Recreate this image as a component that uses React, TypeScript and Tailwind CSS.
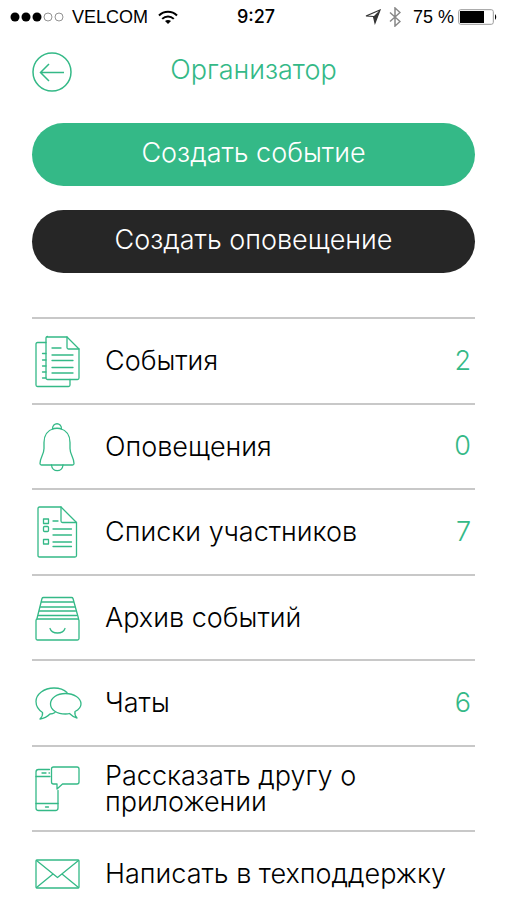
import React from 'react';

interface IconProps {
    children: React.ReactNode;
}

// Shared frame for the outline icons in the menu.
const MenuIcon: React.FC<IconProps> = ({ children }) => (
    <svg
        viewBox="0 0 50 56"
        className="h-14 w-[50px] shrink-0"
        fill="none"
        stroke="#34b987"
        strokeWidth="1.3"
        strokeLinecap="round"
        strokeLinejoin="round"
        aria-hidden="true"
    >
        {children}
    </svg>
);

const DocumentsIcon = () => (
    <MenuIcon>
        <path d="M15 4h20l12 12v29q0 1.500-1.500 1.500h-30q-1.500 0-1.500-1.500v-40q0-1.500 1.500-1.500z" />
        <path d="M35 4v10.500q0 1.500 1.500 1.500h10.500" />
        <path d="M14 9.500h-8.500q-1.500 0-1.500 1.500v41q0 1.500 1.500 1.500h31q1.500 0 1.500-1.500v-5.500" />
        <path d="M20 15h9M20 22h21M20 27.500h21M20 34.500h21M20 40h21M10.500 20.500h3.500M10.500 27h3.500M10.500 33h3.500M10.500 39h3.500M10.500 45h3.500" />
    </MenuIcon>
);

const BellIcon = () => (
    <MenuIcon>
        <path d="M22 9.500c-7 2-10 7-10 14v6c0 6-4 9-4 15 0 1 .5 1.500 1.500 1.500h31c1 0 1.500-.5 1.500-1.500 0-6-4-9-4-15v-6c0-7-3-12-10-14" />
        <path d="M20.500 10c0-7 9-7 9 0-2-1-7-1-9 0z" />
        <path d="M19.500 46c.5 7.500 11 7.500 11.500 0" />
    </MenuIcon>
);

const ListIcon = () => (
    <MenuIcon>
        <path d="M7.500 3h21.500l15.500 15.500v33q0 1.500-1.500 1.500h-35.500q-1.500 0-1.500-1.500v-47q0-1.500 1.500-1.500z" />
        <path d="M29 3v14q0 1.500 1.500 1.500h14" />
        <rect x="11.500" y="15" width="5" height="4.500" />
        <rect x="11.500" y="22.500" width="5" height="5" rx="1" />
        <rect x="11.500" y="35.500" width="5" height="4.500" />
        <path d="M21 17h5M21 25h18.500M21 31h18.500M21 38h18.500M21 42.500h18.500" />
    </MenuIcon>
);

const ArchiveIcon = () => (
    <MenuIcon>
        <rect x="4" y="29" width="43" height="21" rx="1.500" />
        <path d="M18 38.500c2 6 13 6 15 0" />
        <path d="M5 28.500l5-20q.3-1 1.500-1h28q1.200 0 1.500 1l5.500 20" />
        <path d="M9.500 12h32M8.500 17h34M7.500 21h36M6.500 25.500h38" />
    </MenuIcon>
);

const ChatsIcon = () => (
    <MenuIcon>
        <path d="M35 17.500c-3-3-7.500-4.500-13-4.500-10 0-18 6-18 13.500 0 4.500 2 8 6.500 11 .5 2.500-.5 4.500-2.500 6.500 4-.5 7.500-2.500 10-5 2 0 3.500-.5 5-1.500" />
        <path d="M33.500 18.500c-8.500 0-15 4.500-15 10.500s6.500 10 15 10c1.500 0 2.500 0 4-.5 2.500 2.500 4.500 4 7.500 4.500-1.500-1.500-2.500-4-2-6.500 4-2 6-4.500 6-7.500 0-6-7-10.500-15.500-10.500z" />
    </MenuIcon>
);

const ShareIcon = () => (
    <MenuIcon>
        <path d="M17.500 8.500h-11q-2.500 0-2.500 2.500v36q0 2.500 2.500 2.500h17q2.500 0 2.500-2.500v-17.500" />
        <path d="M4 15.500h14M4 42.500h22M10 12h4M13.500 46h3M17 12h.5" />
        <path d="M21.500 6h23.500q2 0 2 2v13q0 2-2 2h-14.500l-5.500 5v-5h-3.500q-2 0-2-2v-13q0-2 2-2z" />
    </MenuIcon>
);

const MailIcon = () => (
    <MenuIcon>
        <rect x="4" y="14" width="43" height="28" rx="1" />
        <path d="M4.500 14.500l21 17 21-17M4.500 41.500l16.500-13.500M46.500 41.500l-16.500-13.500" />
    </MenuIcon>
);

const menuItems = [
    { name: 'События', icon: DocumentsIcon, count: 2 },
    { name: 'Оповещения', icon: BellIcon, count: 0 },
    { name: 'Списки участников', icon: ListIcon, count: 7 },
    { name: 'Архив событий', icon: ArchiveIcon },
    { name: 'Чаты', icon: ChatsIcon, count: 6 },
    { name: 'Рассказать другу о приложении', icon: ShareIcon },
    { name: 'Написать в техподдержку', icon: MailIcon },
];

const StatusBar = () => (
    <div className="grid h-[34px] grid-cols-[1fr_auto_1fr] items-center pl-2.5 pr-2 text-lg text-black">
        <div className="flex items-center">
            <svg viewBox="0 0 56 12" className="mr-1.5 h-3 w-14" aria-hidden="true">
                <circle cx="5" cy="6" r="4.500" />
                <circle cx="16" cy="6" r="4.500" />
                <circle cx="27" cy="6" r="4.500" />
                <circle cx="38" cy="6" r="4" fill="none" stroke="#777" strokeWidth=".8" />
                <circle cx="49" cy="6" r="4" fill="none" stroke="#777" strokeWidth=".8" />
            </svg>
            <span>VELCOM</span>
            <svg viewBox="0 0 20 15" className="ml-2.5 h-[15px] w-5" fill="none" stroke="#000" strokeWidth="2" aria-hidden="true">
                <path d="M1 5.500c5-5 13-5 18 0M4.200 8.900c3.300-3.300 8.300-3.300 11.600 0" />
                <path d="M10 14l-3-3c1.700-1.500 4.300-1.500 6 0z" fill="#000" stroke="none" />
            </svg>
        </div>
        <span className="pl-1 font-['Inter','Liberation_Sans',sans-serif] font-medium">9:27</span>
        <div className="flex items-center justify-end">
            <svg viewBox="0 0 16 16" className="h-4 w-4" fill="none" stroke="#333" strokeWidth="1.2" aria-hidden="true">
                <path d="M15 1l-5 13-1.500-6.500-7.500-.5z" />
                <path d="M15 1l-5 13-1.500-6.500z" fill="#333" stroke="none" />
            </svg>
            <svg viewBox="0 0 12 20" className="ml-2 h-5 w-3" fill="none" stroke="#888" strokeWidth="1.500" aria-hidden="true">
                <path d="M1 5.500l10 9-5 4.500v-18l5 4.500-10 9" />
            </svg>
            <span className="ml-3">75 %</span>
            <svg viewBox="0 0 40 16" className="ml-1 h-4 w-10" aria-hidden="true">
                <rect x=".7" y=".7" width="34.600" height="14.600" rx="2" fill="none" stroke="#999" />
                <rect x="2" y="2" width="24" height="12" />
                <path d="M37 5q2.500 3 0 6z" />
            </svg>
        </div>
    </div>
);

const App = () => {
    return (
        <div className="bg-white font-['Liberation_Sans',Arial,sans-serif]">
            <StatusBar />
            <div className="pl-8 pr-[31px] font-['Inter','Liberation_Sans',sans-serif] text-[27px] font-light">
                <header className="grid h-[89px] grid-cols-[40px_1fr_40px] items-start pt-[18px]">
                    <button aria-label="Назад" className="cursor-pointer">
                        <svg viewBox="0 0 40 40" className="h-10 w-10" fill="none" stroke="#34b987" strokeWidth="1.500">
                            <circle cx="20" cy="20" r="19" />
                            <path d="M32 20.500h-23M17 12l-8.500 8.500 8.500 8.500" />
                        </svg>
                    </button>
                    <h1 className="text-center leading-9 text-[#34b987]">Организатор</h1>
                </header>

                <div className="flex flex-col gap-6">
                    <button className="h-[63px] cursor-pointer rounded-full bg-[#34b987] pb-0.5 text-white">
                        Создать событие
                    </button>
                    <button className="h-[63px] cursor-pointer rounded-full bg-[#262626] pb-0.5 text-white">
                        Создать оповещение
                    </button>
                </div>

                <nav className="mt-11">
                    <ul>
                        {menuItems.map(({ name, icon: Icon, count }) => (
                            <li key={name} className="border-t-2 border-[#c8c8c8] odd:h-[86px] even:h-[85px]">
                                <a href="#" className="flex h-full items-center text-black">
                                    <Icon />
                                    <span className="ml-[23px] flex-1 leading-[26px]">{name}</span>
                                    {count !== undefined && (
                                        <span className="pr-1 text-[#34b987]">{count}</span>
                                    )}
                                </a>
                            </li>
                        ))}
                    </ul>
                </nav>
            </div>
        </div>
    );
};

export default App;
